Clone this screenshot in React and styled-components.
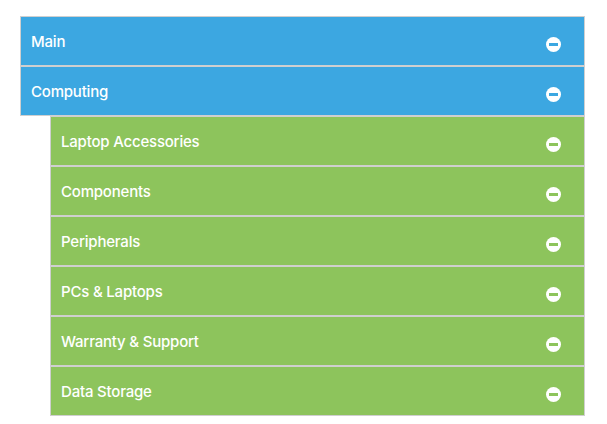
import styled, { createGlobalStyle } from "styled-components";

const GlobalStyle = createGlobalStyle`
    body {
        margin: 0;
        background: #ffffff;
        font-family: Inter, "Noto Sans", sans-serif;
    }
`;

const Menu = styled.ul`
    list-style: none;
    margin: 0;
    padding: 0;
    width: 565px;
    margin: 16px 0 0 20px;
`;

const Item = styled.li`
    display: flex;
    align-items: center;
    justify-content: space-between;
    box-sizing: border-box;
    height: 50px;
    margin-left: ${({ depth }) => depth * 30}px;
    padding: 0 23px 0 10px;
    border: 1px solid #cfcfcf;
    background: ${({ depth }) => (depth > 0 ? "#8dc45c" : "#3ca7e1")};
    color: #ffffff;
    font-size: 15px;
    font-weight: 500;
    letter-spacing: -0.2px;
`;

const Label = styled.span`
    padding-top: 1px;
`;

const Toggle = styled.span`
    display: flex;
    align-items: center;
    justify-content: center;
    width: 15px;
    height: 15px;
    margin-top: 6px;
    border-radius: 50%;
    background: #ffffff;
    &::after {
        content: "";
        width: 9px;
        height: 3px;
        background: ${({ depth }) => (depth > 0 ? "#8dc45c" : "#3ca7e1")};
    }
`;

const items = [
    { label: "Main", depth: 0 },
    { label: "Computing", depth: 0 },
    { label: "Laptop Accessories", depth: 1 },
    { label: "Components", depth: 1 },
    { label: "Peripherals", depth: 1 },
    { label: "PCs & Laptops", depth: 1 },
    { label: "Warranty & Support", depth: 1 },
    { label: "Data Storage", depth: 1 },
];

function App() {
    return (
        <>
            <GlobalStyle />
            <Menu>
                {items.map(({ label, depth }) => (
                    <Item key={label} depth={depth}>
                        <Label>{label}</Label>
                        <Toggle depth={depth} />
                    </Item>
                ))}
            </Menu>
        </>
    );
}

export default App;
